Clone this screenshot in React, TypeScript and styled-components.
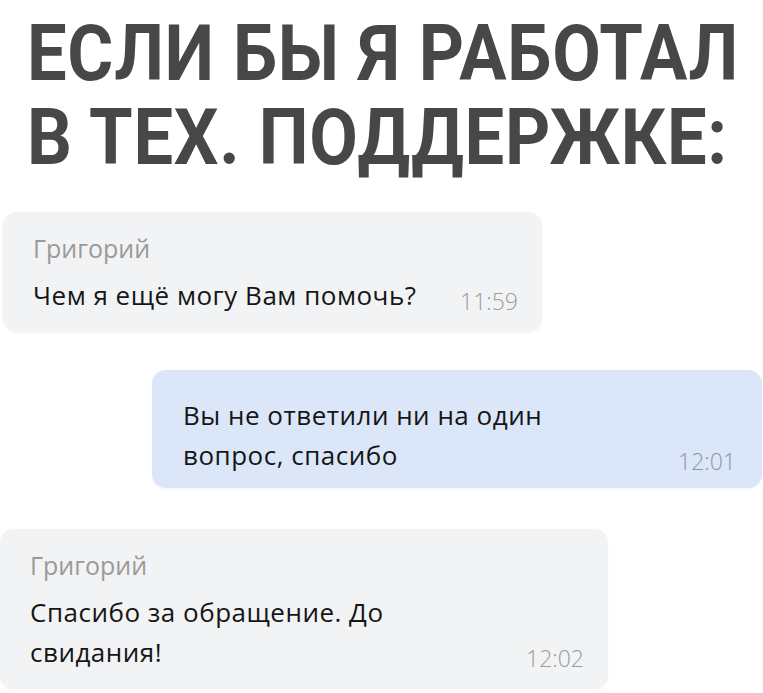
import React from "react";
import styled, { createGlobalStyle } from "styled-components";

const Global = createGlobalStyle`
  html, body { margin: 0; padding: 0; background: #ffffff; }
  body { font-family: "Open Sans", "Noto Sans", sans-serif; }
`;

const Page = styled.div`
  width: 763px;
  height: 693px;
  overflow: hidden;
  display: flex;
  flex-direction: column;
`;

const Title = styled.h1`
  margin: 0;
  padding: 12px 0 0 27px;
  font-family: "Roboto", "Liberation Sans", sans-serif;
  font-weight: 700;
  font-size: 77px;
  line-height: 84px;
  color: #474747;
  white-space: nowrap;
  letter-spacing: 0.8px;
`;

const TitleText = styled.span`
  display: inline-block;
  transform: scaleX(0.915);
  transform-origin: left top;
`;

const Chat = styled.div`
  display: flex;
  flex-direction: column;
  margin-top: 32px;
`;

const Bubble = styled.div<{ $mine?: boolean; $w: number; $ml: number; $mt: number }>`
  box-sizing: border-box;
  width: ${(p) => p.$w}px;
  margin-left: ${(p) => p.$ml}px;
  margin-top: ${(p) => p.$mt}px;
  padding: ${(p) => (p.$mine ? "25px 26px 13px 31px" : "18px 24px 17px 30px")};
  border-radius: 14px;
  background: ${(p) => (p.$mine ? "#dbe7f9" : "#f2f3f5")};
  box-shadow: 0 1px 3px rgba(0, 0, 0, 0.04);
`;

const Name = styled.div`
  font-size: 25px;
  line-height: 36px;
  color: #9a9a9a;
  font-weight: 400;
  margin-bottom: 9px;
`;

const Row = styled.div`
  display: flex;
  align-items: flex-end;
  justify-content: space-between;
  gap: 20px;
`;

const Text = styled.div<{ $w?: number }>`
  font-size: 26px;
  line-height: 40px;
  letter-spacing: 0.5px;
  color: #161616;
  max-width: ${(p) => (p.$w ? `${p.$w}px` : "none")};
`;

const Time = styled.div<{ $mine?: boolean }>`
  font-size: 23px;
  line-height: 27px;
  font-weight: 300;
  color: ${(p) => (p.$mine ? "#8b97a8" : "#9b9b9b")};
`;

export default function App() {
  return (
    <Page>
      <Global />
      <Title>
        <TitleText>
          ЕСЛИ БЫ Я РАБОТАЛ
          <br />
          В ТЕХ. ПОДДЕРЖКЕ:
        </TitleText>
      </Title>
      <Chat>
        <Bubble $w={539} $ml={3} $mt={0}>
          <Name>Григорий</Name>
          <Row>
            <Text>Чем я ещё могу Вам помочь?</Text>
            <Time>11:59</Time>
          </Row>
        </Bubble>
        <Bubble $mine $w={610} $ml={152} $mt={38}>
          <Row>
            <Text $w={420}>Вы не ответили ни на один вопрос, спасибо</Text>
            <Time $mine>12:01</Time>
          </Row>
        </Bubble>
        <Bubble $w={608} $ml={0} $mt={41}>
          <Name>Григорий</Name>
          <Row>
            <Text $w={400}>Спасибо за обращение. До свидания!</Text>
            <Time>12:02</Time>
          </Row>
        </Bubble>
      </Chat>
    </Page>
  );
}
